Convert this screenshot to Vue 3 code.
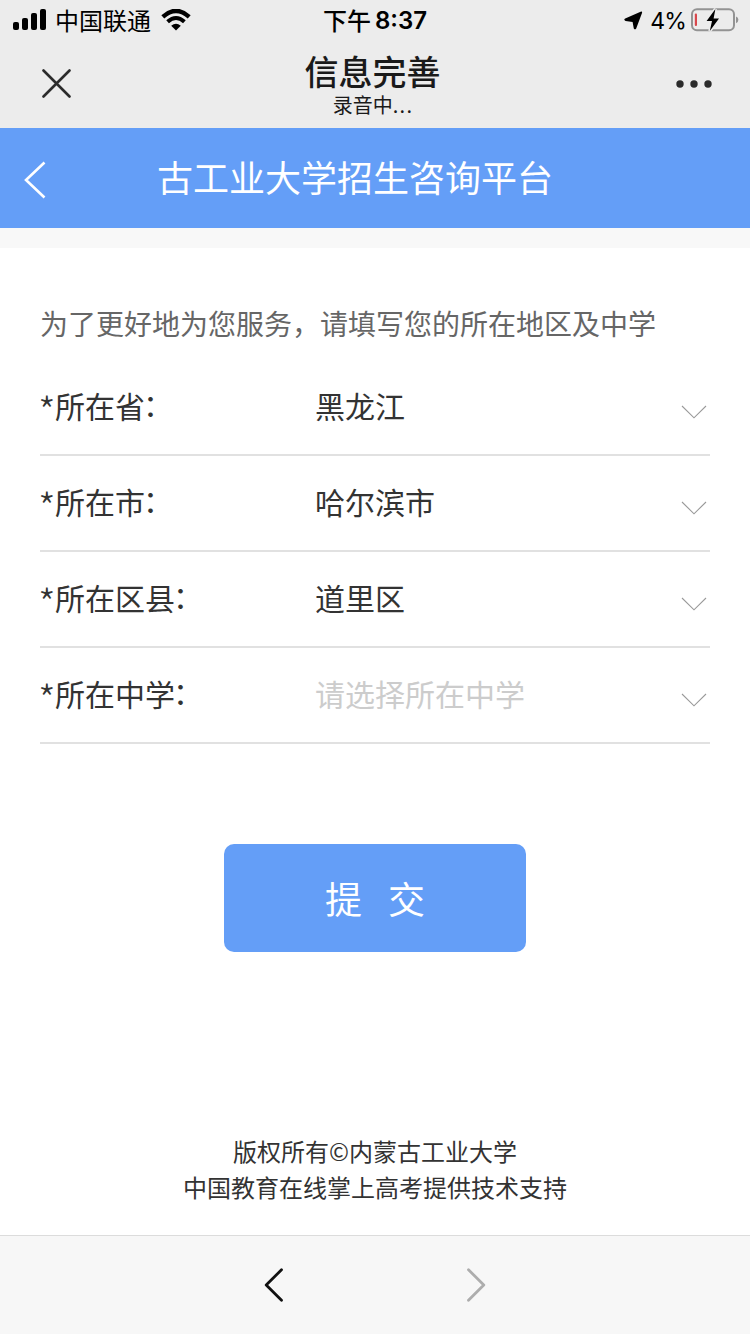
<template>
  <div class="page">
    <div class="status-bar">
      <div class="status-bar__left">
        <svg class="icon-signal" width="34" height="22" viewBox="0 0 34 22">
          <rect x="0" y="13" width="6" height="8" rx="2" />
          <rect x="9" y="9" width="6" height="12" rx="2" />
          <rect x="18" y="4" width="6" height="17" rx="2" />
          <rect x="27" y="0" width="6" height="21" rx="2" />
        </svg>
        <span class="status-bar__carrier">中国联通</span>
        <svg class="icon-wifi" width="30" height="22" viewBox="0 0 30 22">
          <path d="M1.8 7.8 Q15 -4 28.2 7.8" fill="none" stroke="#000" stroke-width="4.4" />
          <path d="M6.6 12.8 Q15 5.2 23.4 12.8" fill="none" stroke="#000" stroke-width="4" />
          <path d="M10.2 16.8 Q15 12.6 19.8 16.8 L15 21.6 Z" />
        </svg>
      </div>
      <div class="status-bar__time">
        <span>下午</span>
        <span class="status-bar__clock">8:37</span>
      </div>
      <div class="status-bar__right">
        <svg class="icon-location" width="20" height="20" viewBox="0 0 20 20">
          <path d="M17.6 1.8 Q19.6 1 19 3 L13.2 18.4 Q12 20.2 10.8 18.4 L9.6 12 L2.6 10.9 Q.2 9.8 2.2 8.4 Z" />
        </svg>
        <span class="status-bar__percent">4%</span>
        <svg class="icon-battery" width="50" height="26" viewBox="0 0 50 26">
          <rect x="3" y="2.2" width="42" height="21" rx="5" fill="none" stroke="#939393" stroke-width="2" />
          <path d="M47 9.4 Q49.4 10.4 49.4 12.8 Q49.4 15.2 47 16.2 Z" fill="#939393" />
          <rect x="5.8" y="6.4" width="2.2" height="12.6" rx="1" fill="#d8474c" />
          <path
            d="M26.4 2 L17.6 14 H23 L20.8 24 L30 11.4 H24.6 Z"
            fill="#000"
            stroke="#ececec"
            stroke-width="3"
            paint-order="stroke"
          />
        </svg>
      </div>
    </div>

    <div class="nav-bar">
      <svg class="icon-close" width="30" height="30" viewBox="0 0 30 30">
        <path d="M1.5 1.5 L27.5 27.5 M27.5 1.5 L1.5 27.5" stroke="#2b2b2b" stroke-width="2.6" stroke-linecap="round" />
      </svg>
      <div class="nav-bar__center">
        <div class="nav-bar__title">信息完善</div>
        <div class="nav-bar__sub">录音中<span class="nav-bar__dots">...</span></div>
      </div>
      <svg class="icon-more" width="36" height="8" viewBox="0 0 36 8">
        <circle cx="4" cy="4" r="3.7" />
        <circle cx="18" cy="4" r="3.7" />
        <circle cx="32" cy="4" r="3.7" />
      </svg>
    </div>

    <header class="header">
      <svg class="header__back" width="24" height="38" viewBox="0 0 24 38">
        <path d="M20.5 1.5 L2 19 L20.5 36.5" fill="none" stroke="#fff" stroke-width="2.6" />
      </svg>
      <h1 class="header__title">古工业大学招生咨询平台</h1>
    </header>

    <main class="content">
      <p class="tip">为了更好地为您服务，请填写您的所在地区及中学</p>
      <div v-for="item in fields" :key="item.label" class="field" @click="onSelect(item)">
        <div class="field__label">
          <span class="field__star">*</span>
          <span>{{ item.label }}</span>
          <span class="field__colon">：</span>
        </div>
        <span class="field__value" :class="{ 'field__value--empty': !item.value }">
          {{ item.value || item.placeholder }}
        </span>
        <svg class="field__arrow" width="26" height="14" viewBox="0 0 26 14">
          <path d="M1 1 L13 12.8 L25 1" fill="none" stroke="#999" stroke-width="1.1" />
        </svg>
      </div>
      <button class="submit" type="button">
        <span>提</span>
        <span>交</span>
      </button>
      <footer class="copyright">
        <p>版权所有©内蒙古工业大学</p>
        <p>中国教育在线掌上高考提供技术支持</p>
      </footer>
    </main>

    <div class="toolbar">
      <svg width="20" height="34" viewBox="0 0 20 34">
        <path d="M17.5 1.8 L2.2 17 L17.5 32.2" stroke="#111" />
      </svg>
      <svg width="20" height="34" viewBox="0 0 20 34">
        <path d="M2.5 1.8 L17.8 17 L2.5 32.2" stroke="#adadad" />
      </svg>
    </div>
  </div>
</template>

<script setup>
import { ref } from 'vue';

const fields = ref([
  { label: '所在省', value: '黑龙江', placeholder: '请选择所在省' },
  { label: '所在市', value: '哈尔滨市', placeholder: '请选择所在市' },
  { label: '所在区县', value: '道里区', placeholder: '请选择所在区县' },
  { label: '所在中学', value: '', placeholder: '请选择所在中学' },
]);

const active = ref(null);

const onSelect = (item) => {
  active.value = item.label;
};
</script>

<style>
body {
  margin: 0;
  background: #fff;
}
</style>

<style scoped>
.page {
  display: flex;
  flex-direction: column;
  width: 750px;
  height: 1334px;
  overflow: hidden;
  background: #fff;
  color: #333;
  font-family: "Noto Sans CJK SC", sans-serif;
}

p,
h1 {
  margin: 0;
}

svg {
  display: block;
  flex: none;
}

.status-bar {
  display: grid;
  grid-template-columns: 1fr auto 1fr;
  align-items: center;
  box-sizing: border-box;
  height: 40px;
  padding: 0 11px 0 13px;
  background: #ececec;
  color: #000;
  font-size: 24px;
  line-height: 38px;
}

.status-bar__left,
.status-bar__right,
.status-bar__time {
  display: flex;
  align-items: center;
}

.status-bar__right {
  justify-content: flex-end;
}

.status-bar__carrier {
  margin: 0 10px 0 8px;
}

.status-bar__time {
  gap: 4px;
  margin-right: 2px;
  font-weight: 500;
}

.status-bar__clock {
  padding-top: 2px;
  font-family: Inter, sans-serif;
  font-weight: 600;
  font-size: 24px;
}

.status-bar__percent {
  margin: 0 3px 0 7px;
  padding-top: 2px;
  font-family: Inter, sans-serif;
  font-size: 23px;
  letter-spacing: -0.8px;
}

.nav-bar {
  display: grid;
  grid-template-columns: 1fr auto 1fr;
  box-sizing: border-box;
  height: 88px;
  padding: 0 38px 0 42px;
  background: #ececec;
}

.icon-close {
  margin-top: 29px;
}

.icon-more {
  justify-self: end;
  margin-top: 40px;
  fill: #2b2b2b;
}

.nav-bar__center {
  margin-right: 9px;
  color: #1a1a1a;
  text-align: center;
}

.nav-bar__title {
  padding-top: 7px;
  font-size: 34px;
  font-weight: 500;
  line-height: 48px;
}

.nav-bar__sub {
  padding-left: 1px;
  font-size: 20px;
  line-height: 20px;
}

.nav-bar__dots {
  letter-spacing: 1.3px;
}

.header {
  display: flex;
  align-items: center;
  box-sizing: border-box;
  height: 120px;
  padding: 0 24px;
  border-bottom: 20px solid #f8f8f8;
  background: #649ef7;
  background-clip: padding-box;
  color: #fff;
}

.header__back {
  margin-top: 4px;
}

.header__title {
  margin-left: 109px;
  padding-bottom: 4px;
  font-size: 36px;
  font-weight: 400;
  line-height: 96px;
}

.content {
  flex: 1;
  padding: 51px 40px 0;
}

.tip {
  color: #666;
  font-size: 28px;
  line-height: 48px;
  white-space: nowrap;
}

.field {
  display: flex;
  align-items: center;
  box-sizing: border-box;
  height: 96px;
  padding-right: 3px;
  border-bottom: 2px solid #e1e1e1;
  font-size: 30px;
  line-height: 90px;
}

.field:first-of-type {
  margin-top: 13px;
}

.field__label {
  display: flex;
  width: 275px;
  padding-bottom: 4px;
}

.field__star {
  width: 15px;
  padding-top: 10px;
  font-size: 40px;
  font-weight: 300;
  line-height: 80px;
  text-indent: -2px;
}

.field__colon {
  margin-left: -2px;
  line-height: 86px;
}

.field__value {
  flex: 1;
  padding-bottom: 4px;
}

.field__value--empty {
  color: #ccc;
}

.field__arrow {
  margin-top: 9px;
}

.submit {
  display: flex;
  align-items: center;
  justify-content: center;
  gap: 26px;
  width: 302px;
  height: 108px;
  margin: 100px auto 0;
  padding: 0;
  border: 0;
  border-radius: 10px;
  background: #649ef7;
  color: #fff;
  font-family: inherit;
  font-size: 37px;
}

.copyright {
  margin-top: 181px;
  font-size: 24px;
  line-height: 36px;
  text-align: center;
}

.toolbar {
  display: flex;
  align-items: center;
  justify-content: center;
  gap: 182px;
  box-sizing: border-box;
  height: 99px;
  border-top: 1px solid #dcdcdc;
  background: #f7f7f7;
}

.toolbar path {
  fill: none;
  stroke-width: 2.8;
  stroke-linecap: round;
  stroke-linejoin: round;
}
</style>
